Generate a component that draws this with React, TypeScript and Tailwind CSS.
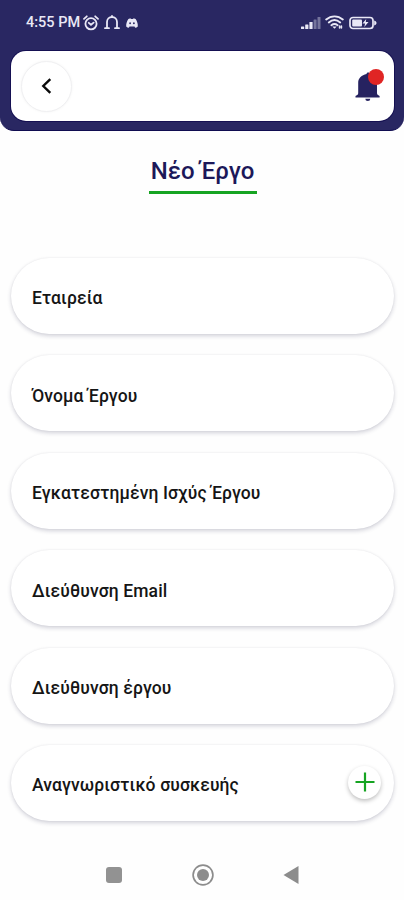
import { useState } from "react";

const fields = [
  { id: "company", label: "Εταιρεία" },
  { id: "name", label: "Όνομα Έργου" },
  { id: "power", label: "Εγκατεστημένη Ισχύς Έργου" },
  { id: "email", label: "Διεύθυνση Email" },
  { id: "address", label: "Διεύθυνση έργου" },
  { id: "device", label: "Αναγνωριστικό συσκευής", addable: true },
];

function StatusBar() {
  return (
    <div className="flex h-[51px] items-center justify-between pr-[27px] pb-[6px] pl-[26px] text-[#e9e8f6]">
      <div className="flex items-center">
        <span className="w-[57px] pt-px text-[14.5px] font-medium whitespace-nowrap">4:55 PM</span>
        {/* Alarm */}
        <svg className="h-4 w-4" viewBox="0 0 16 16" fill="none" stroke="currentColor" strokeWidth="1.8" strokeLinecap="round">
          <circle cx="8" cy="8.8" r="5.6" />
          <path d="M1 3.8 3.8 1.3M15 3.8l-2.8-2.5M5.8 7.8 8 9.8l2.6-2.2" />
        </svg>
        {/* Silent bell */}
        <svg className="ml-[5px] h-4 w-4" viewBox="0 0 16 16" fill="none" stroke="currentColor" strokeWidth="1.8" strokeLinecap="round" strokeLinejoin="round">
          <path d="M1 13.2h4M11 13.2h4M3 13V7a5 5 0 0 1 10 0v6M8 1.8V1" />
        </svg>
        {/* Discord */}
        <svg className="ml-[6px] h-[10px] w-3" viewBox="0 0 12 9" preserveAspectRatio="none">
          <path fill="currentColor" d="M2.4.8 4.4.2l.5.8h2.2l.5-.8 2 .6C11.2 3 12 5.2 11.8 7.6c-.8.7-1.7 1-2.6 1.2L8.5 7.7h-5l-.7 1.1C1.9 8.6 1 8.3.2 7.6 0 5.2.8 3 2.4.8Z" />
          <circle cx="4.1" cy="4.8" r=".9" fill="#292762" />
          <circle cx="7.9" cy="4.8" r=".9" fill="#292762" />
        </svg>
      </div>
      <div className="flex items-center">
        {/* Signal */}
        <svg className="h-[14px] w-[20px]" viewBox="0 0 20 14" fill="currentColor">
          <rect x="0" y="10.5" width="3.2" height="2.5" rx=".5" />
          <rect x="4.2" y="8.5" width="3.2" height="4.5" rx=".5" />
          <rect x="8.4" y="6" width="3.2" height="7" rx=".5" />
          <rect x="12.6" y="3.5" width="3" height="9.5" rx=".5" opacity=".4" />
          <rect x="16.5" y="1" width="3" height="12" rx=".5" opacity=".4" />
        </svg>
        {/* Wifi */}
        <svg className="ml-1 h-[15px] w-[19px]" viewBox="0 0 19 15" fill="none" stroke="currentColor" strokeWidth="1.9" strokeLinecap="round">
          <path d="M1.2 4.5c5-4.2 11.6-4.2 16.6 0M3.8 7.4c3.5-2.9 7.9-2.9 11.4 0M6.4 10.2c2-1.5 4.2-1.5 6.2 0" />
          <path d="m7.3 11.4 2.2 2.4 2.2-2.4Z" fill="currentColor" stroke="none" />
          <path d="M14.6 11v2M16.4 11v2" strokeWidth="1.6" />
        </svg>
        {/* Battery */}
        <svg className="ml-[5px] h-[14px] w-7" viewBox="0 0 28 14">
          <rect x="1" y="1.5" width="23" height="11" rx="3" fill="none" stroke="currentColor" strokeWidth="1.7" />
          <rect x="3.2" y="3.5" width="9.8" height="7" rx="1" fill="currentColor" />
          <path d="M25.2 4.5c1.5.4 2.3 1.3 2.3 2.5s-.8 2.1-2.3 2.5Z" fill="currentColor" />
          <path d="m17.2 3-3.7 4.6h2.6L15.3 11l4.2-4.9h-2.7Z" fill="currentColor" />
        </svg>
      </div>
    </div>
  );
}

function BellButton() {
  return (
    <button type="button" aria-label="Ειδοποιήσεις" className="relative mr-[10px] h-[34px] w-[30px]">
      <svg className="h-[34px] w-[30px]" viewBox="0 0 30 34" fill="#262260">
        <path d="M12.5 5c0-1 .7-1.600 1.700-1.600S16 4 16 5c4.600 1 7 4.200 7 8.500V24c0 1.400.8 2.100 2.600 2.900V28.500H1.500v-1.600C3.500 26.200 4.200 25.400 4.200 24V13.500c0-4.300 3.500-7.500 8.300-8.500Z" />
        <path d="M11.3 29.8h5a2.5 2.2 0 0 1-5 0Z" />
      </svg>
      <span className="absolute top-0 right-0 h-4 w-4 rounded-full bg-[#e02524]" />
    </button>
  );
}

function Header() {
  return (
    <header className="h-[131px] rounded-b-[14px] border-b border-[#100c50] bg-[#292762]">
      <StatusBar />
      <div className="mr-[10px] ml-[11px] flex h-[70px] items-center justify-between rounded-[15px] bg-white shadow-[0_0_0_1px_#151052]">
        <button
          type="button"
          aria-label="Πίσω"
          className="ml-[10px] flex h-[51px] w-[51px] items-center justify-center rounded-full border border-[#f0f0f2] bg-white shadow-[0_0_3px_rgba(0,0,0,0.05)]"
        >
          <svg className="h-4 w-4" viewBox="0 0 16 16" fill="none" stroke="#0b0b0b" strokeWidth="2.4">
            <path d="M11.3 1.2 4.3 8l7 6.8" />
          </svg>
        </button>
        <BellButton />
      </div>
    </header>
  );
}

function NavBar() {
  return (
    <nav className="flex items-center justify-between pt-[43px] pr-[105px] pl-[106px]">
      <svg className="h-4 w-4" viewBox="0 0 16 16">
        <rect width="16" height="16" rx="3" fill="#929292" />
      </svg>
      <svg className="h-[22px] w-[22px]" viewBox="0 0 22 22">
        <circle cx="11" cy="11" r="9.9" fill="none" stroke="#8c8c8c" strokeWidth="1.7" />
        <circle cx="11" cy="11" r="6" fill="#8c8c8c" />
      </svg>
      <svg className="h-[18px] w-4" viewBox="0 0 16 18">
        <path d="M15.5 0v18L.5 9Z" fill="#8c8c8c" />
      </svg>
    </nav>
  );
}

export default function App() {
  const [selected, setSelected] = useState("");

  return (
    <div className="h-[900px] w-[404px] overflow-hidden bg-[#fefefe] font-[Roboto,'Noto_Sans',sans-serif]">
      <Header />
      <div className="flex h-[63px] justify-center pl-px">
        <h1 className="w-[108px] border-b-[3px] border-[#16a422] pt-[22px] text-center text-[24px] leading-9 font-medium whitespace-nowrap text-[#1c1859]">
          Νέο Έργο
        </h1>
      </div>
      <div className="mt-[64px] flex flex-col gap-[21.4px] pr-[10px] pl-[11px]">
        {fields.map((field) => (
          <div
            key={field.id}
            onClick={() => setSelected(field.id)}
            aria-current={selected === field.id}
            className="flex h-[76px] items-center justify-between rounded-full bg-white pt-1 pr-[13px] pl-[21px] shadow-[0_2px_4px_rgba(35,35,75,0.2),0_0_2px_rgba(0,0,0,0.06)]"
          >
            <span className="pt-px text-[17.5px] font-medium tracking-[0.12px] whitespace-nowrap text-[#151515]">{field.label}</span>
            {field.addable && (
              <button
                type="button"
                aria-label="Προσθήκη"
                className="mb-[5px] flex h-[33px] w-[33px] items-center justify-center rounded-full bg-white shadow-[0_2px_4px_rgba(0,0,0,0.25)]"
              >
                <svg className="h-5 w-5" viewBox="0 0 20 20" stroke="#16a422" strokeWidth="2.2">
                  <path d="M10 .5v19M.5 10h19" />
                </svg>
              </button>
            )}
          </div>
        ))}
      </div>
      <NavBar />
    </div>
  );
}
